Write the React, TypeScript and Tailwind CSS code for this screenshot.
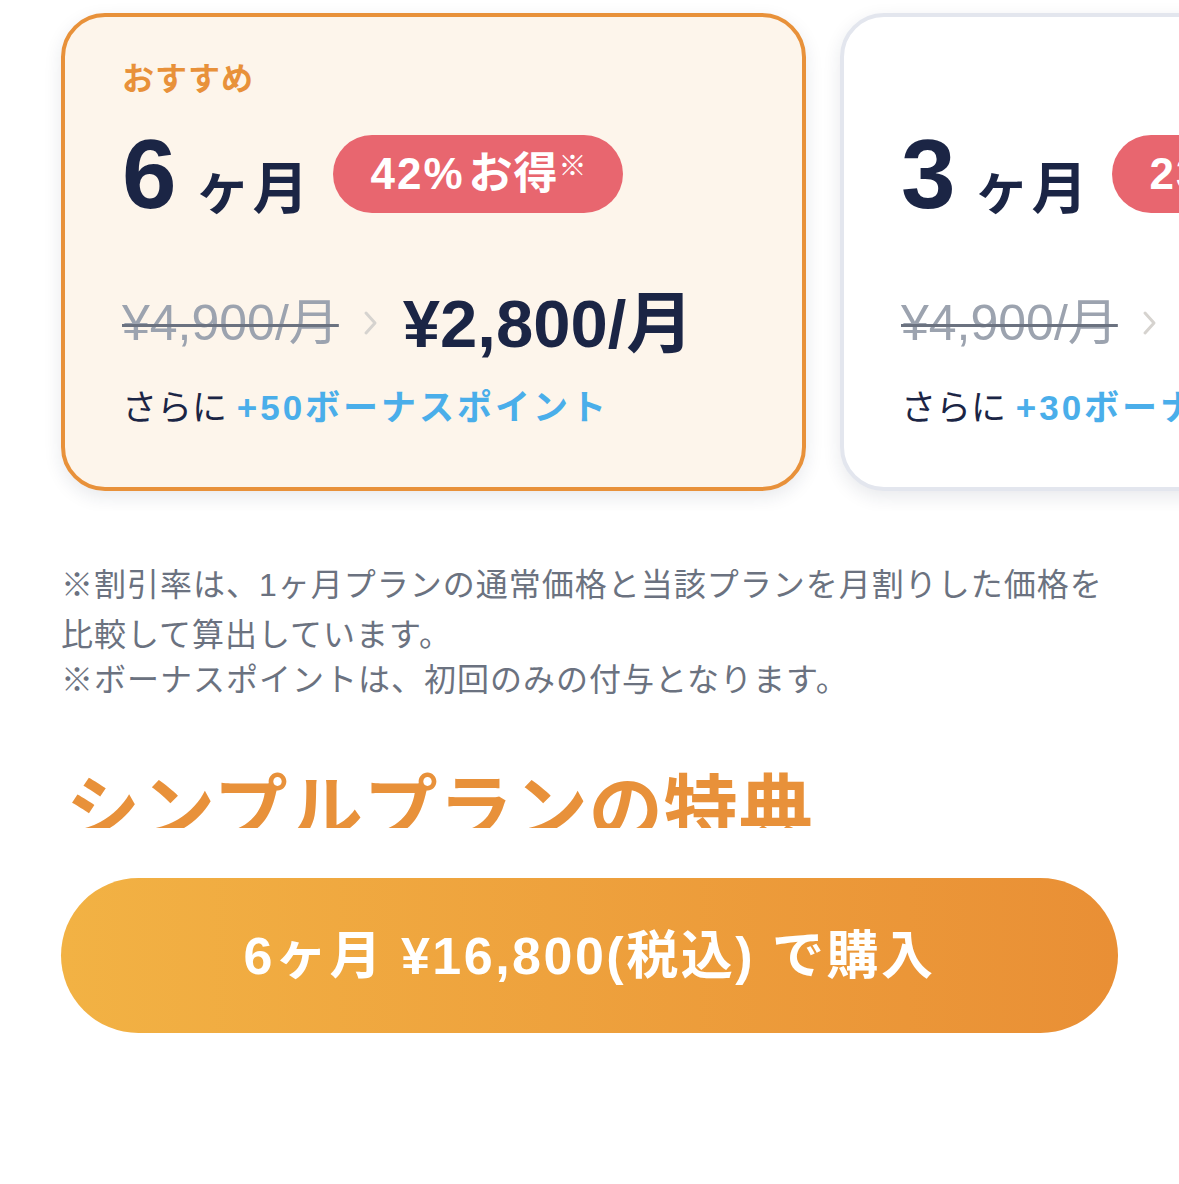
const font = "font-['Liberation_Sans','Noto_Sans_CJK_JP',sans-serif]";

type Plan = {
  months: string;
  off: string;
  was: string;
  now: string;
  bonus: string;
  recommended?: boolean;
};

const plans: Plan[] = [
  { months: "6", off: "42%", was: "¥4,900/月", now: "¥2,800/月", bonus: "+50ボーナスポイント", recommended: true },
  { months: "3", off: "23%", was: "¥4,900/月", now: "¥3,780/月", bonus: "+30ボーナスポイント" },
];

function Chevron() {
  return (
    <svg width="18" height="30" viewBox="0 0 18 30" className="mx-[23px] shrink-0">
      <path d="M4 5 L13 15 L4 25" fill="none" stroke="#d6d3cf" strokeWidth="3" strokeLinecap="round" strokeLinejoin="round" />
    </svg>
  );
}

function PlanCard({ plan }: { plan: Plan }) {
  return (
    <div
      className={
        plan.recommended
          ? "w-[745px] shrink-0 rounded-[44px] border-4 border-[#e8913a] bg-[#fdf5eb] pl-[57px] pt-[44px] pb-[59px] shadow-[0_6px_18px_rgba(30,40,70,0.10)]"
          : "w-[745px] shrink-0 rounded-[44px] border-4 border-[#e3e6ee] bg-white pl-[57px] pt-[44px] pb-[59px] shadow-[0_6px_18px_rgba(30,40,70,0.10)]"
      }
    >
      <div className={"h-[36px] text-[32px] font-bold leading-[36px] tracking-[1px] text-[#e8913a] " + (plan.recommended ? "" : "invisible")}>
        おすすめ
      </div>

      <div className="mt-[38px] flex h-[78px] items-center whitespace-nowrap">
        <div className="flex items-baseline font-bold text-[#1b2545]">
          <span className="text-[98px] leading-none">{plan.months}</span>
          <span className="ml-[18px] text-[56px] leading-none tracking-[2px]">ヶ月</span>
        </div>
        <div className="ml-[22px] flex h-[78px] items-center rounded-full bg-[#e8666f] pl-[38px] pr-[36px] font-bold text-white">
          <span className="text-[44px] leading-none tracking-[2px]">{plan.off}</span>
          <span className="ml-[4px] text-[44px] leading-none tracking-[1px]">お得</span>
          <span className="-mt-[14px] text-[28px] font-normal leading-none">※</span>
        </div>
      </div>

      <div className="mt-[75px] flex h-[70px] items-center whitespace-nowrap">
        <span className="text-[50px] leading-none text-[#9ca3af] line-through decoration-[#6b7280] decoration-[3px]">
          {plan.was}
        </span>
        <Chevron />
        <span className="text-[67px] font-bold leading-none text-[#1b2545]">{plan.now}</span>
      </div>

      <div className="mt-[30px] h-[40px] whitespace-nowrap text-[35px] leading-[40px]">
        <span className="text-[#1b2545]">さらに </span>
        <span className="font-bold tracking-[3px] text-[#4aaeea]">{plan.bonus}</span>
      </div>
    </div>
  );
}

export default function App() {
  return (
    <div className={"min-h-[1184px] w-full bg-white " + font}>
      <div className="h-[828px] overflow-hidden">
        <div className="flex gap-[34px] overflow-hidden pl-[61px] pt-[13px] pb-[20px]">
          {plans.map((p) => (
            <PlanCard key={p.months} plan={p} />
          ))}
        </div>

        <div className="px-[61px] text-[32px] tracking-[1px] text-[#6b7280]">
          <p className="mt-[49px] leading-[50px]">
            ※割引率は、1ヶ月プランの通常価格と当該プランを月割りした価格を
            <br />
            比較して算出しています。
          </p>
          <p className="leading-[40px]">※ボーナスポイントは、初回のみの付与となります。</p>
        </div>

        <h2 className="mt-[74px] px-[66px] text-[74px] font-bold leading-none tracking-[1px] text-[#e8913a]">シンプルプランの特典</h2>
      </div>

      <div className="px-[61px] pt-[50px]">
        <button className="flex h-[155px] w-full items-center justify-center rounded-full bg-linear-to-r from-[#f2b244] to-[#e98f35] text-[52px] font-bold tracking-[2.5px] text-white">
          6ヶ月 ¥16,800(税込) で購入
        </button>
      </div>
    </div>
  );
}
